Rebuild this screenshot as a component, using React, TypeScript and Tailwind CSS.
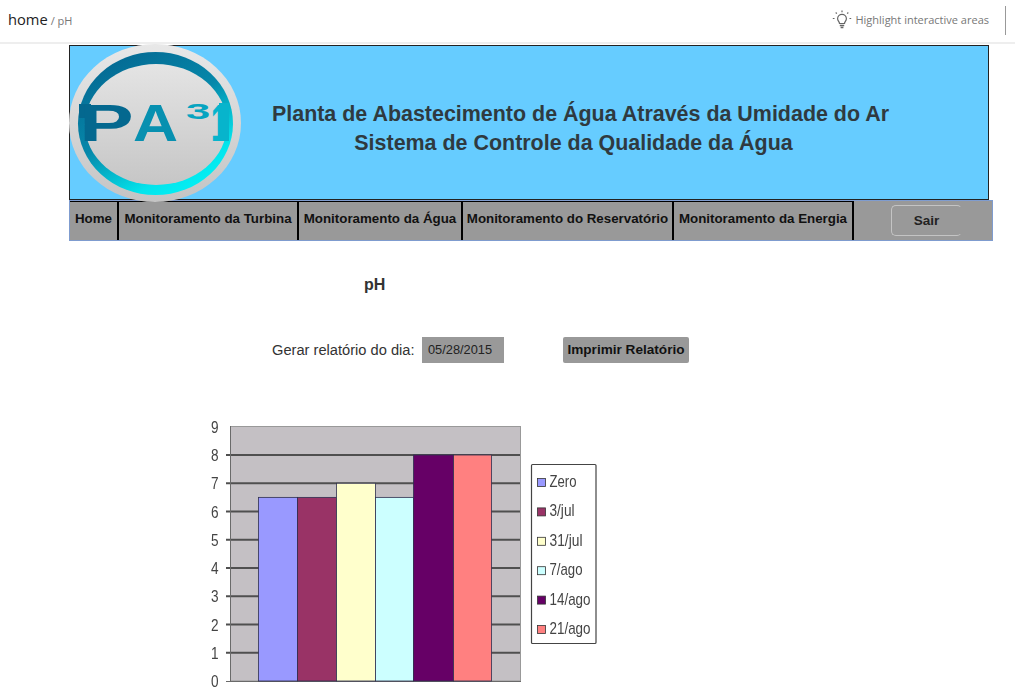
const navItems = [
  { label: "Home", width: "w-[49px]" },
  { label: "Monitoramento da Turbina", width: "w-[180px]" },
  { label: "Monitoramento da Água", width: "w-[164px]" },
  { label: "Monitoramento do Reservatório", width: "w-[211px]" },
  { label: "Monitoramento da Energia", width: "w-[180px]" },
];

const bars = [
  { x: 258.5, w: 39, value: 6.5, color: "#9999ff" },
  { x: 297.5, w: 39, value: 6.5, color: "#993366" },
  { x: 336.5, w: 39, value: 7, color: "#ffffcc" },
  { x: 375.5, w: 38, value: 6.5, color: "#ccffff" },
  { x: 413.5, w: 40, value: 8, color: "#660066" },
  { x: 453.5, w: 38, value: 8, color: "#ff8080" },
];

const legend = [
  { label: "Zero", color: "#9999ff", width: 27 },
  { label: "3/jul", color: "#993366", width: 25 },
  { label: "31/jul", color: "#ffffcc", width: 33 },
  { label: "7/ago", color: "#ccffff", width: 33 },
  { label: "14/ago", color: "#660066", width: 41 },
  { label: "21/ago", color: "#ff8080", width: 41 },
];

const yFor = (v: number) => 680 - v * 28.25;

function Logo() {
  const font = "Liberation Sans, sans-serif";
  return (
    <svg width="174" height="160" viewBox="0 0 174 160" className="absolute left-[-1px] top-[-2px]">
      <defs>
        <linearGradient id="outer" x1="0" y1="0" x2="0" y2="1">
          <stop offset="0" stopColor="#e8e8e8" />
          <stop offset="1" stopColor="#c4c4c4" />
        </linearGradient>
        <linearGradient id="ring" x1="0.1" y1="0" x2="0.7" y2="1">
          <stop offset="0" stopColor="#04648f" />
          <stop offset="0.5" stopColor="#0688aa" />
          <stop offset="0.85" stopColor="#03e4ec" />
          <stop offset="1" stopColor="#03f0f4" />
        </linearGradient>
        <linearGradient id="inner" x1="0" y1="0" x2="0" y2="1">
          <stop offset="0" stopColor="#e4e4e4" />
          <stop offset="1" stopColor="#c6c6c6" />
        </linearGradient>
      </defs>
      <ellipse cx="86" cy="79" rx="86" ry="79" fill="url(#outer)" />
      <ellipse cx="86.5" cy="79.5" rx="77.5" ry="71.5" fill="url(#ring)" />
      <ellipse cx="87" cy="80.5" rx="71" ry="60.5" fill="url(#inner)" />
      <rect x="10" y="60" width="12" height="14" fill="#04688f" />
      <rect x="150" y="59" width="10" height="38" fill="#07b4cc" />
      <text transform="translate(10.3 97) scale(1.57 1)" fontFamily={font} fontWeight="700" fontSize="52" fill="#04688f">P</text>
      <text transform="translate(64 97) scale(1.2 1)" fontFamily={font} fontWeight="700" fontSize="52" fill="#0790b0">A</text>
      <text transform="translate(117 75) scale(1.9 1)" fontFamily={font} fontWeight="700" fontSize="23" fill="#06a4c0">3</text>
      <text transform="translate(142 97) scale(0.55 1)" fontFamily={font} fontWeight="700" fontSize="52" fill="#07b4cc">1</text>
    </svg>
  );
}

function BulbIcon() {
  return (
    <svg width="20" height="20" viewBox="0 0 20 20" fill="none" stroke="#666" strokeWidth="1.2" className="mr-[3px]">
      <path d="M7.5 13.5c0-1.800-1.900-2.600-1.900-4.800a4.400 4.400 0 0 1 8.800 0c0 2.200-1.900 3-1.900 4.800z" />
      <path d="M7.800 15.500h4.400M8.600 17.500h2.800" strokeWidth="1.500" />
      <path d="M10 .5v1.800M3.700 2.500l1.100 1.100M16.300 2.500l-1.100 1.100M.8 8.500h1.700M17.500 8.500h1.700" />
    </svg>
  );
}

function PhChart() {
  const grid = [1, 2, 3, 4, 5, 6, 7, 8];
  const ticks = [0, 1, 2, 3, 4, 5, 6, 7, 8, 9];
  const font = "Liberation Sans, sans-serif";
  return (
    <svg width="420" height="285" viewBox="200 410 420 285" className="block blur-[0.7px]">
      <rect x="230.5" y="425.5" width="290" height="254.5" fill="#c4c0c4" stroke="#999" strokeWidth="1" />
      {grid.map((v) => (
        <line key={v} x1="226" x2="520" y1={yFor(v)} y2={yFor(v)} stroke="#4f4f4f" strokeWidth="1.8" />
      ))}
      <line x1="230.5" x2="230.5" y1="425" y2="681" stroke="#6a6a6a" strokeWidth="1" />
      <line x1="226" x2="521" y1="680.5" y2="680.5" stroke="#6a6a6a" strokeWidth="1" />
      {ticks.map((v) => (
        <text key={v} transform={`translate(211 ${yFor(v) + 6}) scale(0.8 1)`} fontFamily={font} fontSize="17" fill="#444">{v}</text>
      ))}
      {bars.map((b) => (
        <rect key={b.x} x={b.x} y={yFor(b.value)} width={b.w} height={680 - yFor(b.value)} fill={b.color} stroke="#2f2f4f" strokeWidth="0.8" />
      ))}
      <rect x="531.5" y="463.5" width="64.5" height="179" fill="#fff" stroke="#444" strokeWidth="1.2" rx="1" />
      {legend.map((l, i) => (
        <g key={l.label}>
          <rect x="537.5" y={477.5 + i * 29.4} width="8" height="8" fill={l.color} stroke="#333" strokeWidth="0.8" />
          <text x="549.5" y={486 + i * 29.4} fontFamily={font} fontSize="17" fill="#444" textLength={l.width} lengthAdjust="spacingAndGlyphs">{l.label}</text>
        </g>
      ))}
    </svg>
  );
}

export default function App() {
  return (
    <div className="h-[695px] w-[1015px] overflow-hidden bg-white font-['Liberation_Sans',Arial,sans-serif] text-[#333]">
      <header className="flex h-[44px] items-center justify-between border-b-2 border-[#eeeeee] pl-2 font-['Open_Sans',sans-serif]">
        <div className="-mt-[4px] flex items-baseline gap-[3px]">
          <span className="text-[14.7px] text-[#222]">home</span>
          <span className="text-[11px] text-[#777]">/ pH</span>
        </div>
        <div className="-mt-[2px] flex items-center">
          <BulbIcon />
          <span className="text-[11px] text-[#777]">Highlight interactive areas</span>
          <div className="ml-4 mr-[9px] h-[29px] w-px bg-[#999]" />
        </div>
      </header>

      <div className="mt-px ml-[69px] w-[924px]">
        <div className="relative flex h-[155px] w-[920px] flex-col items-center justify-center border border-[#222] bg-[#66ccff] pl-[103px] pt-[13px] text-center text-[21.45px] leading-[29px] font-bold text-[#2f3a40]">
          <Logo />
          <div className="relative">Planta de Abastecimento de Água Através da Umidade do Ar</div>
          <div className="relative pr-[14px]">Sistema de Controle da Qualidade da Água</div>
        </div>

        <nav className="flex h-[41px] items-stretch border border-[#7f9ccf] bg-[#999999] text-[13.33px] font-bold text-[#111]">
          {navItems.map((item) => (
            <div key={item.label} className={`${item.width} flex items-center justify-center border-r-2 border-t border-black`}>
              <span className="-mt-[4px] whitespace-nowrap">{item.label}</span>
            </div>
          ))}
          <div className="flex flex-1 items-center pl-[37px]">
            <button className="h-[31px] w-[71px] rounded-[5px] border border-[#c4c4c4] border-r-transparent pt-[1px] text-center text-[13.5px] font-bold text-[#222]">Sair</button>
          </div>
        </nav>
      </div>

      <h1 className="mt-[33px] ml-[364px] text-[16px] leading-[22px] font-bold text-[#333]">pH</h1>

      <div className="mt-[41px] ml-[272px] flex items-center">
        <span className="w-[150px] text-[14.67px] text-[#333]">Gerar relatório do dia:</span>
        <div className="flex h-[26px] w-[82px] items-center bg-[#999999] pl-[6px] text-[12.8px] text-[#222]">05/28/2015</div>
        <button className="ml-[59px] h-[26px] w-[126px] rounded-[2px] bg-[#999999] text-center text-[13.6px] font-bold text-[#111]">Imprimir Relatório</button>
      </div>

      <div className="mt-[48px] ml-[200px]">
        <PhChart />
      </div>
    </div>
  );
}
